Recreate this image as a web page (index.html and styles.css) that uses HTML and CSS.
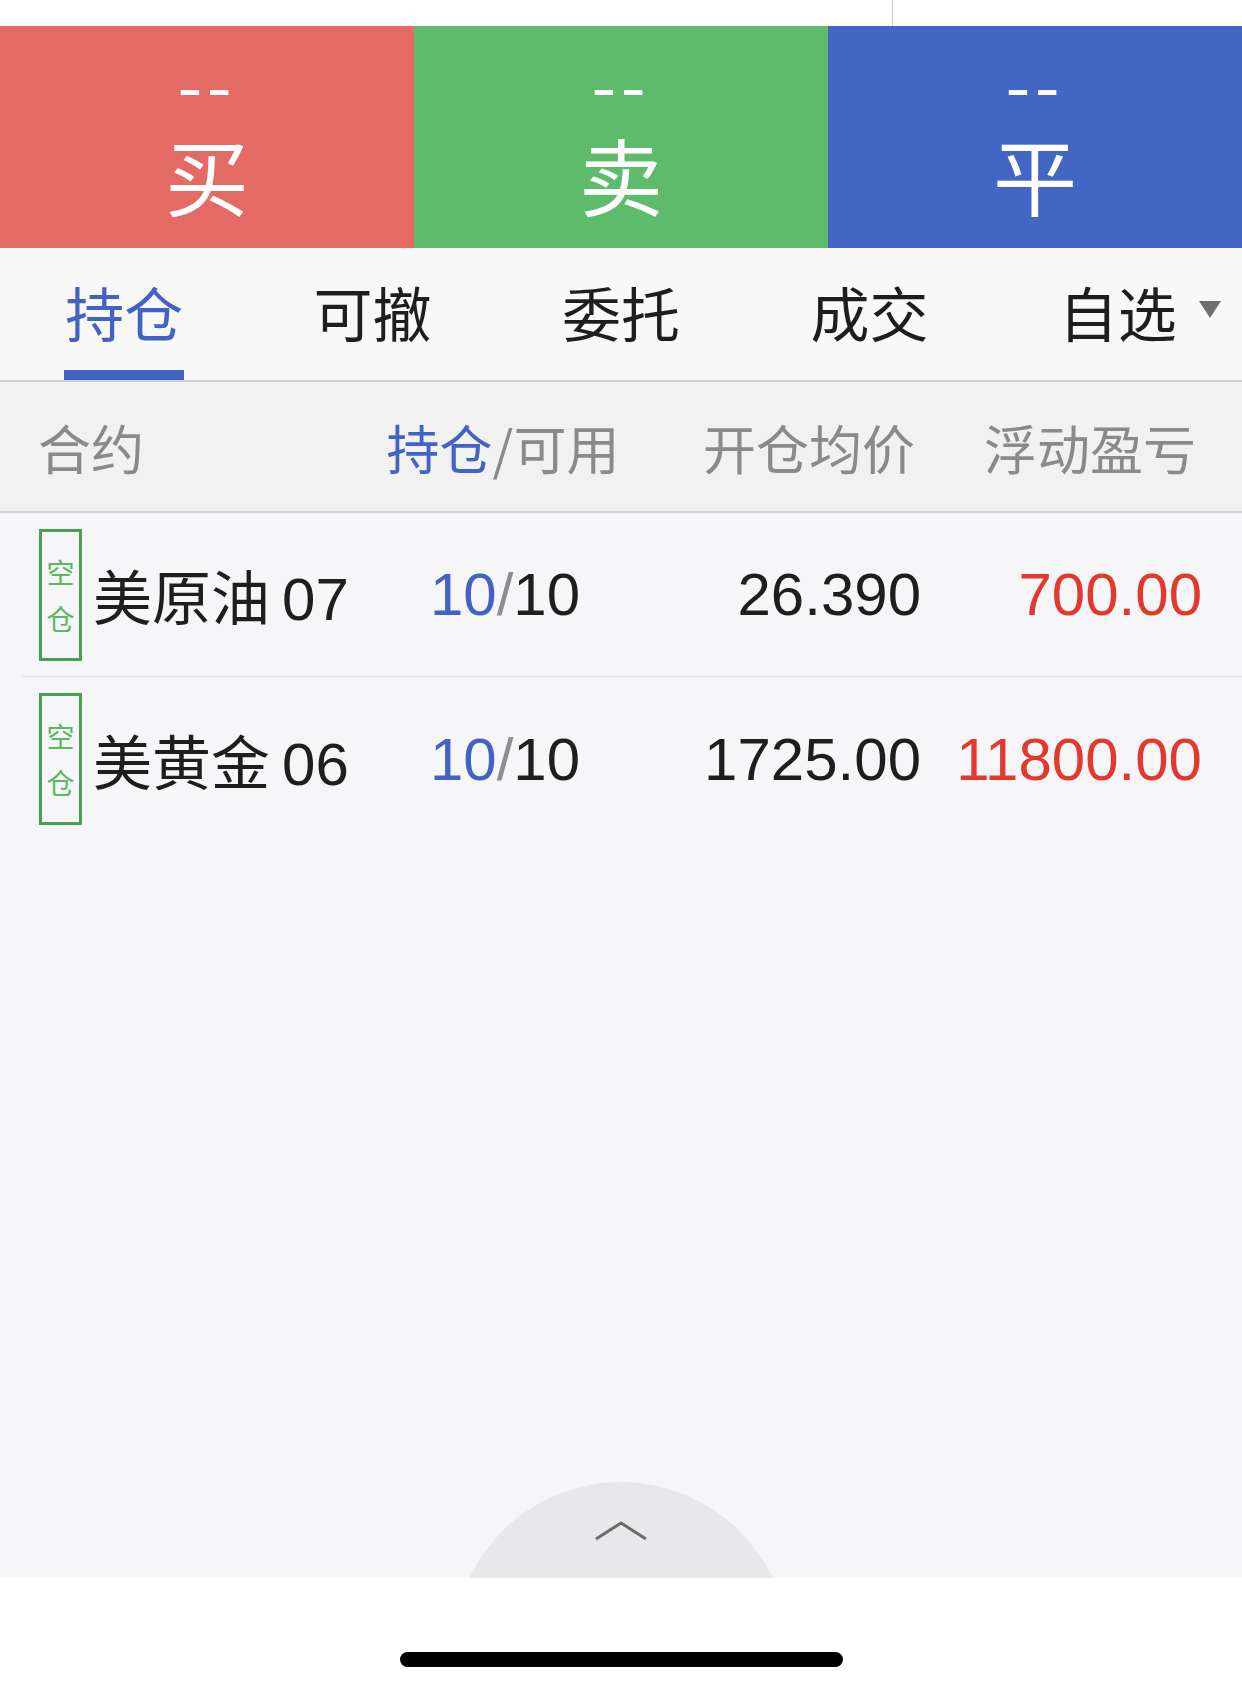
FILE: index.html
```html
<!DOCTYPE html>
<html lang="zh-CN">
<head>
<meta charset="utf-8">
<title>持仓</title>
<link rel="stylesheet" href="styles.css">
</head>
<body>
<div class="app">
  <div class="topbar"><div class="topbar-left"></div><div class="topbar-right"></div></div>

  <div class="actions">
    <div class="action action-buy"><span class="price">--</span><span class="label">买</span></div>
    <div class="action action-sell"><span class="price">--</span><span class="label">卖</span></div>
    <div class="action action-close"><span class="price">--</span><span class="label">平</span></div>
  </div>

  <div class="tabs">
    <div class="tab active"><span class="tab-text">持仓</span></div>
    <div class="tab"><span class="tab-text">可撤</span></div>
    <div class="tab"><span class="tab-text">委托</span></div>
    <div class="tab"><span class="tab-text">成交</span></div>
    <div class="tab"><span class="tab-text">自选<span class="caret"></span></span></div>
  </div>

  <div class="thead">
    <div class="th th-name">合约</div>
    <div class="th th-center"><span class="blue">持仓</span>/可用</div>
    <div class="th th-right">开仓均价</div>
    <div class="th th-right">浮动盈亏</div>
  </div>

  <div class="rows">
    <div class="row">
      <div class="cell-name"><span class="badge"><span>空</span><span>仓</span></span><span class="name">美原油<span class="code">07</span></span></div>
      <div class="num center"><span class="blue">10</span><span class="slash">/</span>10</div>
      <div class="num right">26.390</div>
      <div class="num right red">700.00</div>
    </div>
    <div class="row">
      <div class="cell-name"><span class="badge"><span>空</span><span>仓</span></span><span class="name">美黄金<span class="code">06</span></span></div>
      <div class="num center"><span class="blue">10</span><span class="slash">/</span>10</div>
      <div class="num right">1725.00</div>
      <div class="num right red">11800.00</div>
    </div>
  </div>

  <div class="fill">
    <div class="pull">
      <svg class="chevron" width="56" height="22" viewBox="0 0 56 22"><path d="M3 19 L28 3 L53 19" fill="none" stroke="#6b6b6b" stroke-width="3"/></svg>
    </div>
  </div>

  <div class="homebar"><div class="home-indicator"></div></div>
</div>
</body>
</html>
```

FILE: styles.css
```css
* { box-sizing: border-box; }
html, body { margin: 0; padding: 0; }
body {
  width: 1242px;
  height: 1690px;
  overflow: hidden;
  background: #ffffff;
  font-family: "Liberation Sans", "Noto Sans CJK SC", sans-serif;
  color: #222222;
}
.app {
  display: flex;
  flex-direction: column;
  height: 1690px;
}

/* top strip */
.topbar {
  display: flex;
  height: 26px;
  background: #ffffff;
}
.topbar-left {
  width: 893px;
  border-right: 1px solid #c9c9cc;
}
.topbar-right { flex: 1; }

/* action buttons */
.actions {
  display: flex;
  height: 222px;
}
.action {
  flex: 1;
  display: flex;
  flex-direction: column;
  align-items: center;
  color: #ffffff;
}
.action-buy { background: #e46a65; }
.action-sell { background: #5dbb6b; }
.action-close { background: #4266c4; }
.price {
  font-family: "Liberation Sans", sans-serif;
  font-weight: bold;
  font-size: 40px;
  line-height: 30px;
  height: 30px;
  margin-top: 48px;
  letter-spacing: 3px;
  transform: scaleX(1.8);
}
.label {
  font-family: "Noto Sans CJK SC", sans-serif;
  font-size: 84px;
  line-height: 86px;
  margin-top: 27px;
}

/* tabs */
.tabs {
  display: flex;
  height: 134px;
  background: #f8f8f8;
  border-bottom: 2px solid #cfcfd3;
}
.tab {
  flex: 1;
  display: flex;
  align-items: center;
  justify-content: center;
  position: relative;
  font-family: "Noto Sans CJK SC", sans-serif;
  font-size: 59px;
  color: #1e1e1e;
  padding-bottom: 6px;
}
.tab.active { color: #4263c2; }
.tab.active::after {
  content: "";
  position: absolute;
  left: 50%;
  bottom: 0;
  width: 120px;
  margin-left: -60px;
  height: 10px;
  background: #4263c2;
}
.tab-text { position: relative; }
.caret {
  position: absolute;
  left: 100%;
  top: 50%;
  margin-left: 22px;
  margin-top: -10px;
  width: 0;
  height: 0;
  border-left: 11px solid transparent;
  border-right: 11px solid transparent;
  border-top: 17px solid #6e6e70;
}

/* table header */
.thead {
  display: grid;
  grid-template-columns: 370px 270px 281px 281px;
  padding-right: 40px;
  height: 131px;
  align-items: center;
  background: #f1f1f2;
  border-bottom: 2px solid #d2d2d6;
  font-family: "Noto Sans CJK SC", sans-serif;
  font-size: 53px;
  color: #8a8a8c;
}
.th-name { padding-left: 38px; }
.th-center { text-align: center; padding-right: 4px; }
.th-right { text-align: right; padding-right: 6px; }
.blue { color: #4263c2; }
.red { color: #e2392e; }

/* rows */
.rows {
  background: #f6f6f8;
  padding-left: 22px;
}
.row {
  display: grid;
  grid-template-columns: 348px 270px 281px 281px;
  padding-right: 38px;
  height: 164px;
  align-items: center;
  border-bottom: 1px solid #e2e2e6;
}
.row:last-child { border-bottom: none; }
.cell-name {
  display: flex;
  align-items: center;
  padding-left: 17px;
}
.badge {
  display: flex;
  flex-direction: column;
  align-items: center;
  justify-content: center;
  gap: 16px;
  width: 43px;
  height: 132px;
  border: 3px solid #4a9f50;
  font-family: "Noto Sans CJK SC", sans-serif;
  font-size: 28px;
  line-height: 30px;
  color: #5cb85e;
}
.name {
  margin-left: 11px;
  font-family: "Noto Sans CJK SC", sans-serif;
  font-size: 59px;
  color: #1e1e1e;
}
.code {
  font-family: "Liberation Sans", sans-serif;
  font-size: 60px;
  margin-left: 12px;
}
.num {
  font-family: "Liberation Sans", sans-serif;
  font-size: 60px;
  color: #1e1e1e;
}
.num.red { color: #e2392e; }
.num .blue { color: #4263c2; }
.center { text-align: center; }
.right { text-align: right; }
.slash { color: #8e8e90; }

/* empty area with pull-up button */
.fill {
  flex: 1;
  background: #f6f6f8;
  display: flex;
  flex-direction: column;
  justify-content: flex-end;
  align-items: center;
  overflow: hidden;
}
.pull {
  width: 336px;
  height: 336px;
  border-radius: 50%;
  background: #e8e8ea;
  margin-bottom: -240px;
  display: flex;
  justify-content: center;
  padding-top: 38px;
  flex-shrink: 0;
}
.chevron { display: block; }

/* home indicator */
.homebar {
  height: 112px;
  background: #ffffff;
  display: flex;
  justify-content: center;
  padding-top: 74px;
}
.home-indicator {
  width: 443px;
  height: 15px;
  border-radius: 8px;
  background: #000000;
}
```
